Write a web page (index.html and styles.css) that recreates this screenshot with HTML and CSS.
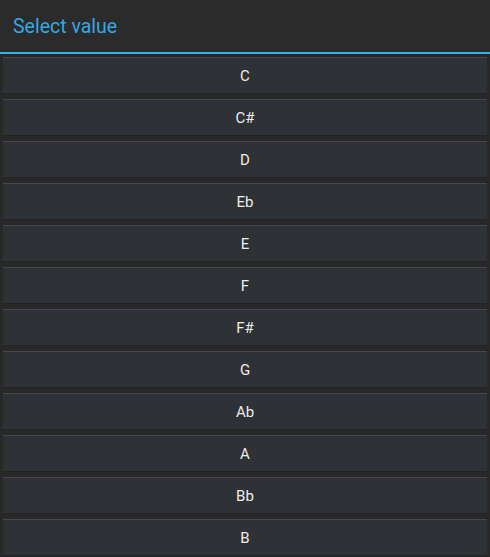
FILE: index.html
```html
<!DOCTYPE html>
<html>
<head>
<meta charset="utf-8">
<link rel="stylesheet" href="styles.css">
</head>
<body>
<div class="dialog">
  <div class="title">Select value</div>
  <div class="divider"></div>
  <div class="list">
    <div class="item">C</div>
    <div class="item">C#</div>
    <div class="item">D</div>
    <div class="item">Eb</div>
    <div class="item">E</div>
    <div class="item">F</div>
    <div class="item">F#</div>
    <div class="item">G</div>
    <div class="item">Ab</div>
    <div class="item">A</div>
    <div class="item">Bb</div>
    <div class="item">B</div>
  </div>
</div>
</body>
</html>
```
FILE: styles.css
```css
html, body {
  margin: 0;
  padding: 0;
  background: #282828;
}
.dialog {
  width: 490px;
  height: 557px;
  background: #282828;
  font-family: Roboto, "Liberation Sans", sans-serif;
  overflow: hidden;
}
.title {
  height: 52px;
  box-sizing: border-box;
  padding-left: 13px;
  display: flex;
  align-items: center;
  color: #36a8e0;
  font-size: 19.5px;
  background: #2b2b2b;
}
.divider {
  height: 2px;
  background: #33b5e5;
}
.list {
  padding: 3px 3px 0 3px;
  display: flex;
  flex-direction: column;
  gap: 5px;
}
.item {
  height: 37px;
  box-sizing: border-box;
  border-top: 1px solid #45484c;
  border-bottom: 1px solid #212325;
  background: #2e3135;
  color: #ececec;
  font-size: 15px;
  display: flex;
  align-items: center;
  justify-content: center;
}
```
